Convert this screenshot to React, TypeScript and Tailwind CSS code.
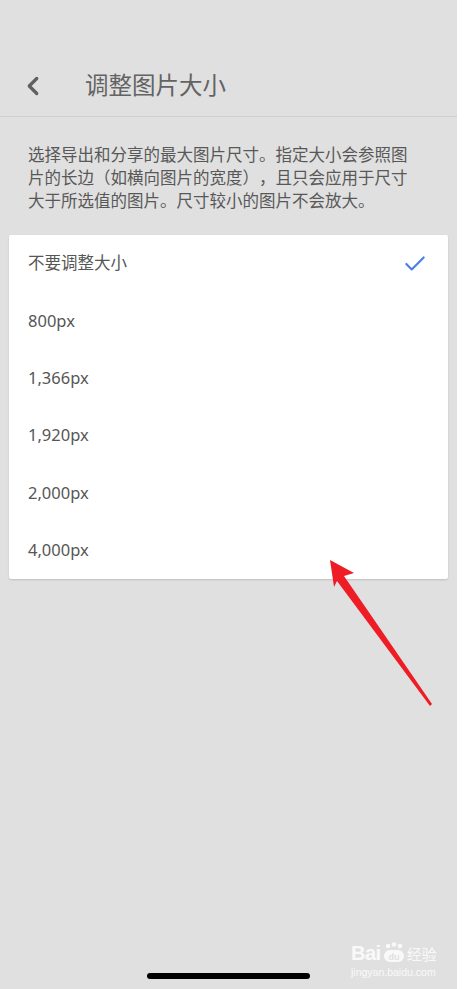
import { Check, ChevronLeft } from 'lucide-react'

const sizes = ['不要调整大小', '800px', '1,366px', '1,920px', '2,000px', '4,000px']

const font = { fontFamily: '"Noto Sans", "Noto Sans CJK SC", sans-serif' }

export default function App() {
  return (
    <div className="w-[467px] h-[989px] bg-white flex" style={font}>
      <div className="relative w-[457px] h-full bg-[#e0e0e0] flex flex-col overflow-hidden">
        {/* Header */}
        <div className="h-[117px] shrink-0 border-b border-[#cfcfcf] flex items-center pt-[56px]">
          <ChevronLeft className="ml-[18px] w-[30px] h-[30px] text-[#5f5f5f]" strokeWidth={2.6} />
          <h1 className="ml-[37px] text-[23.5px] leading-none text-[#636363]">调整图片大小</h1>
        </div>

        {/* Description */}
        <p className="mt-[26px] ml-[28px] w-[400px] text-[16.5px] leading-[23px] text-[#585858] [text-spacing-trim:space-all]">
          选择导出和分享的最大图片尺寸。指定大小会参照图
          <br />
          片的长边（如横向图片的宽度），且只会应用于尺寸
          <br />
          大于所选值的图片。尺寸较小的图片不会放大。
        </p>

        {/* Options */}
        <div className="mt-[23px] mx-[9px] w-[439px] bg-white rounded-[2px] shadow-[0_1px_2px_rgba(0,0,0,0.15)]">
          {sizes.map((s, i) => (
            <div key={s} className="h-[57.33px] flex items-center justify-between pl-[19px] pr-[20px]">
              <span className="text-[16.5px] text-[#565656]">{s}</span>
              {i === 0 && <Check className="w-[26px] h-[26px] text-[#4a7fe3]" strokeWidth={2} />}
            </div>
          ))}
        </div>

        {/* Red annotation arrow */}
        <svg className="absolute left-0 top-0 pointer-events-none" width="457" height="989">
          <polygon
            points="330,560 354,573 344,576 432,704 430,706 337,581 334,587"
            fill="#ee1c25"
          />
        </svg>

        {/* Watermark */}
        <div className="absolute left-[351px] top-[942px] text-white/80 select-none">
          <div className="flex items-end gap-[1px] leading-none">
            <span className="text-[20px] font-bold tracking-tight" style={{ fontFamily: '"Liberation Sans", sans-serif' }}>Bai</span>
            <svg width="24" height="21" viewBox="0 0 24 21">
              <circle cx="6" cy="4" r="2.3" fill="currentColor" />
              <circle cx="12" cy="2.5" r="2.3" fill="currentColor" />
              <circle cx="18" cy="4" r="2.3" fill="currentColor" />
              <rect x="2" y="8" width="20" height="12" rx="6" fill="currentColor" />
              <text x="12" y="17.5" fontSize="9" textAnchor="middle" fill="#e0e0e0" fontFamily="Liberation Sans, sans-serif" fontWeight="bold">du</text>
            </svg>
            <span className="text-[15px] mb-[2px]" style={{ fontFamily: '"Noto Sans CJK SC", sans-serif' }}>经验</span>
          </div>
          <div className="text-[10.5px] leading-none mt-[4px]" style={{ fontFamily: '"Liberation Sans", sans-serif' }}>jingyan.baidu.com</div>
        </div>

        {/* Home indicator */}
        <div className="absolute left-[147px] top-[973px] w-[163px] h-[6px] rounded-full bg-black" />
      </div>
    </div>
  )
}
